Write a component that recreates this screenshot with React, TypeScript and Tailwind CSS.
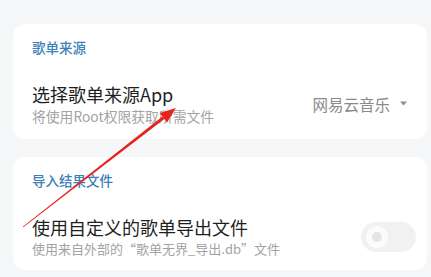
import React from "react";

export default function App() {
  const font = { fontFamily: '"Noto Sans CJK SC", "Noto Sans", sans-serif' };
  // arrow geometry
  const tail = [23, 227];
  const tip = [176, 108];
  const dx = tip[0] - tail[0];
  const dy = tip[1] - tail[1];
  const len = Math.hypot(dx, dy);
  const ux = dx / len;
  const uy = dy / len;
  const px = -uy;
  const py = ux;
  const headLen = 16;
  const headHalf = 6;
  const bx = tip[0] - ux * headLen;
  const by = tip[1] - uy * headLen;
  const head = `${tip[0]},${tip[1]} ${bx + px * headHalf},${by + py * headHalf} ${bx - px * headHalf},${by - py * headHalf}`;
  const wTail = 0.4;
  const wHead = 1.6;
  const shaft = `${tail[0] + px * wTail},${tail[1] + py * wTail} ${bx + px * wHead},${by + py * wHead} ${bx - px * wHead},${by - py * wHead} ${tail[0] - px * wTail},${tail[1] - py * wTail}`;

  return (
    <div className="relative w-[431px] h-[277px] overflow-hidden bg-[#f5f6f8]" style={font}>
      <div className="flex flex-col gap-[18px] pt-[24px] pl-[13px] pr-[4px]">
        <div className="bg-white rounded-[12px] pt-[13px] pb-[14px] pl-[19px] pr-[20px]">
          <div className="h-[20px] leading-[20px] text-[13.5px] font-medium text-[#3d7fb6]">歌单来源</div>
          <div className="mt-[25px] flex items-center justify-between">
            <div className="flex flex-col">
              <div className="h-[24px] leading-[24px] text-[18px] text-[#1f1f1f]">选择歌单来源App</div>
              <div className="mt-[1px] h-[18px] leading-[18px] text-[13.8px] text-[#a3a3a3]">将使用Root权限获取所需文件</div>
            </div>
            <div className="flex items-center gap-[10px] text-[#8a8a8a]">
              <span className="text-[15.5px] leading-[20px]">网易云音乐</span>
              <svg width="7" height="5" viewBox="0 0 7 5">
                <polygon points="0,0.5 7,0.5 3.5,4.5" fill="#8f8f8f" />
              </svg>
            </div>
          </div>
        </div>
        <div className="bg-white rounded-[12px] pt-[13px] pb-[12px] pl-[19px] pr-[11px]">
          <div className="h-[20px] leading-[20px] text-[13.5px] font-medium text-[#3d7fb6]">导入结果文件</div>
          <div className="mt-[25px] flex items-center justify-between">
            <div className="flex flex-col">
              <div className="h-[24px] leading-[24px] text-[18px] text-[#1f1f1f]">使用自定义的歌单导出文件</div>
              <div className="mt-[1px] h-[18px] leading-[18px] text-[13px] text-[#a3a3a3]">使用来自外部的“歌单无界_导出.db”文件</div>
            </div>
            <div className="w-[55px] h-[30px] rounded-full bg-[#f1f1f1] flex items-center pl-[5px]">
              <div className="w-[22px] h-[22px] rounded-full bg-[#fbfbfb] flex items-center justify-center">
                <div className="w-[10px] h-[10px] rounded-full bg-[#e4e4e4]" />
              </div>
            </div>
          </div>
        </div>
      </div>
      <svg className="absolute left-0 top-0 pointer-events-none" width="431" height="277" viewBox="0 0 431 277">
        <polygon points={shaft} fill="#e8231f" />
        <polygon points={head} fill="#e8231f" />
      </svg>
    </div>
  );
}
